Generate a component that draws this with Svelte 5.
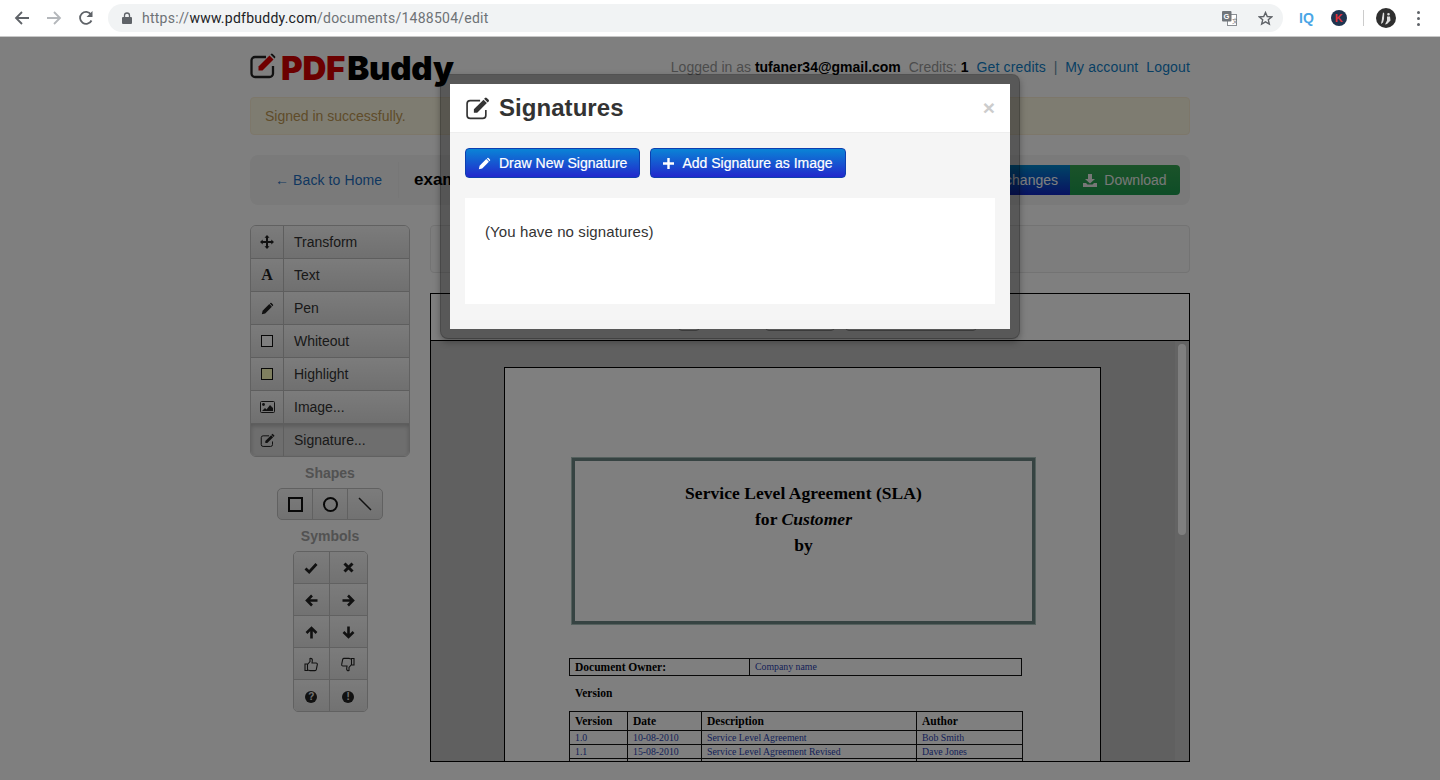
<script>
  const tools = [
    { id: 'move', label: 'Transform' },
    { id: 'a', label: 'Text' },
    { id: 'pen', label: 'Pen' },
    { id: 'white', label: 'Whiteout' },
    { id: 'high', label: 'Highlight' },
    { id: 'image', label: 'Image...' },
    { id: 'edit', label: 'Signature...', active: true }
  ];
  const symbols = ['check', 'x', 'left', 'right', 'up', 'down', 'tup', 'tdown', 'q', 'ex'];
  const rows = [
    ['1.0', '10-08-2010', 'Service Level Agreement', 'Bob Smith'],
    ['1.1', '15-08-2010', 'Service Level Agreement Revised', 'Dave Jones'],
    ['', '', '', '']
  ];
</script>

{#snippet editIcon(size, color)}
  <svg width={size} height={size} viewBox="0 0 24 24" fill="none">
    <path d="M20 13.500V18.500a3 3 0 0 1-3 3H5a3 3 0 0 1-3-3V7.500a3 3 0 0 1 3-3h9.500" stroke={color} stroke-width="1.600"/>
    <path d="M8.500 12.800 17.800 3.500l3.200 3.200L11.700 16H8.500Z" fill={color}/>
    <path d="M19.200 1.800a1.200 1.200 0 0 1 1.700 0l1.800 1.800a1.200 1.200 0 0 1 0 1.700l-.9.900-3.500-3.500Z" fill={color}/>
  </svg>
{/snippet}

{#snippet pencil(size, color)}
  <svg width={size} height={size} viewBox="0 0 16 16">
    <path d="M1 15l1-4.200L10.200 2.600l3.200 3.200L5.200 14Z" fill={color}/>
    <path d="M11.500 1.300a1 1 0 0 1 1.400 0l1.800 1.800a1 1 0 0 1 0 1.400l-.6.600-3.200-3.200Z" fill={color}/>
  </svg>
{/snippet}

{#snippet toolIcon(id)}
  {#if id === 'move'}
    <svg width="14" height="14" viewBox="0 0 14 14" fill="#222">
      <path d="M7 0l2.500 2.700H8V6h3.300V4.500L14 7l-2.700 2.500V8H8v3.300h1.500L7 14l-2.500-2.700H6V8H2.700v1.500L0 7l2.700-2.500V6H6V2.700H4.500Z"/>
    </svg>
  {:else if id === 'a'}
    <span class="glyph-a">A</span>
  {:else if id === 'pen'}
    {@render pencil(13, '#222')}
  {:else if id === 'white'}
    <span class="swatch"></span>
  {:else if id === 'high'}
    <span class="swatch yellow"></span>
  {:else if id === 'image'}
    <svg width="15" height="12" viewBox="0 0 15 12">
      <rect x=".5" y=".5" width="14" height="11" rx="1" fill="none" stroke="#222"/>
      <circle cx="3.500" cy="3.500" r="1.400" fill="#222"/>
      <path d="M2 10l3-3 1.500 1.500L10 4l3 3v3Z" fill="#222"/>
    </svg>
  {:else}
    {@render editIcon(15, '#222')}
  {/if}
{/snippet}

{#snippet symbolIcon(id)}
  {#if id === 'check'}
    <svg width="14" height="12" viewBox="0 0 14 12"><path d="M1.500 6.500l3.700 3.500 7.300-8" fill="none" stroke="#222" stroke-width="2.800"/></svg>
  {:else if id === 'x'}
    <svg width="11" height="11" viewBox="0 0 11 11"><path d="M1.500 1.500l8 8M9.500 1.500l-8 8" stroke="#222" stroke-width="3"/></svg>
  {:else if id === 'left'}
    <svg width="13" height="13" viewBox="0 0 13 13"><path d="M7 1.500 2 6.500l5 5M2.500 6.500H12.500" fill="none" stroke="#222" stroke-width="2.600"/></svg>
  {:else if id === 'right'}
    <svg width="13" height="13" viewBox="0 0 13 13"><path d="M6 1.500l5 5-5 5M10.500 6.500H.5" fill="none" stroke="#222" stroke-width="2.600"/></svg>
  {:else if id === 'up'}
    <svg width="13" height="13" viewBox="0 0 13 13"><path d="M1.500 7l5-5 5 5M6.500 2.500V12.500" fill="none" stroke="#222" stroke-width="2.600"/></svg>
  {:else if id === 'down'}
    <svg width="13" height="13" viewBox="0 0 13 13"><path d="M1.500 6l5 5 5-5M6.500 10.500V.5" fill="none" stroke="#222" stroke-width="2.600"/></svg>
  {:else if id === 'tup'}
    <svg width="14" height="15" viewBox="0 0 14 15"><path d="M1 7h2.500v6.500H1ZM3.500 7.500 6 4.500V1.500c1.500-.5 2.500.5 2.300 2L8 6h4c1 0 1.500.8 1.300 1.600l-1 5c-.2.700-.7 1-1.300 1H6c-1 0-1.500-.6-2.500-.6" fill="none" stroke="#222" stroke-width="1.100"/></svg>
  {:else if id === 'tdown'}
    <svg width="14" height="15" viewBox="0 0 14 15"><path d="M13 8h-2.500V1.500H13ZM10.500 7.500 8 10.500v3c-1.500.5-2.500-.5-2.300-2L6 9H2c-1 0-1.500-.8-1.300-1.600l1-5c.2-.7.7-1 1.300-1h5c1 0 1.500.6 2.500.6" fill="none" stroke="#222" stroke-width="1.100"/></svg>
  {:else if id === 'q'}
    <b class="round">?</b>
  {:else}
    <b class="round">!</b>
  {/if}
{/snippet}

<div class="screen">
  <header class="chrome">
    <svg class="nav first" width="16" height="16" viewBox="0 0 16 16"><path d="M15 8H2.500M8 2 2 8l6 6" fill="none" stroke="#5f6368" stroke-width="1.800"/></svg>
    <svg class="nav" width="16" height="16" viewBox="0 0 16 16"><path d="M1 8h12.500M8 2l6 6-6 6" fill="none" stroke="#b4b7bb" stroke-width="1.800"/></svg>
    <svg class="nav" width="16" height="16" viewBox="0 0 16 16"><path d="M13.500 10.500A6 6 0 1 1 13 4.500" fill="none" stroke="#5f6368" stroke-width="1.800"/><path d="M14.500 1v6h-6Z" fill="#5f6368"/></svg>
    <div class="omnibox">
      <svg width="10" height="12" viewBox="0 0 10 12"><path d="M2.500 5V3.500a2.500 2.500 0 0 1 5 0V5" fill="none" stroke="#5f6368" stroke-width="1.300"/><rect y="5" width="10" height="7" rx="1" fill="#5f6368"/></svg>
      <span class="url"><span class="dim">https://</span>www.pdfbuddy.com<span class="dim">/documents/1488504/edit</span></span>
      <svg class="translate" width="15" height="15" viewBox="0 0 15 15"><rect x="5.500" y="3.500" width="9" height="11" fill="#fff" stroke="#8b8f94"/><rect width="9.500" height="10.500" rx="1" fill="#70757a"/><text x="1.500" y="8" font-size="7.500" font-weight="bold" fill="#fff" font-family="Liberation Sans">G</text><text x="10" y="12" font-size="6" fill="#70757a" font-family="Noto Sans CJK SC">文</text></svg>
      <svg class="star" width="15" height="15" viewBox="0 0 16 16"><path d="M8 1.600l1.900 4.300 4.700.4-3.600 3.100 1.100 4.600L8 11.600 3.900 14 5 9.400 1.400 6.300l4.700-.4Z" fill="none" stroke="#5f6368" stroke-width="1.500"/></svg>
    </div>
    <span class="iq">IQ</span>
    <span class="k">K</span>
    <span class="divider"></span>
    <span class="avatar"><svg width="20" height="20" viewBox="0 0 20 20"><circle cx="10" cy="10" r="10" fill="#2f2f2f"/><path d="M7 4.500c1 0 1.500 1 1.200 2L8 11l-1 3.500-2 1.500c.5-3 1-4 1-6ZM12.500 5a1.300 1.300 0 1 1 0 2.600 1.300 1.300 0 0 1 0-2.600ZM11 8.500h3l.5 4-3.500 3.500-2 .5 2-4Z" fill="#ddd"/></svg></span>
    <span class="dots"><i></i><i></i><i></i></span>
  </header>

  <div class="viewport">
    <div class="page">
      <div class="top">
        <div class="logo">
          <svg width="27" height="27" viewBox="0 0 27 27" fill="none">
            <path d="M23 14v7.500a3.500 3.500 0 0 1-3.500 3.500H5a3.500 3.500 0 0 1-3.500-3.500V8.500A3.500 3.500 0 0 1 5 5h11" stroke="#222" stroke-width="2.300"/>
            <path d="M8.500 14.500 19.500 3.500l4 4L12.500 18.500H8.500Z" fill="#e00000"/>
            <path d="M21 2a1.200 1.200 0 0 1 1.700 0l2.300 2.300a1.200 1.200 0 0 1 0 1.700l-.5.500-4-4Z" fill="#222"/>
          </svg>
          <span class="brand"><b class="red">PDF</b><b>Buddy</b></span>
        </div>
        <nav class="account">
          <span class="muted">Logged in as</span> <strong>tufaner34@gmail.com</strong>
          <span class="muted credits">Credits:</span> <strong>1</strong>
          <a href="#c" class="link credits">Get credits</a>
          <span class="sep">|</span>
          <a href="#a" class="link">My account</a>
          <a href="#l" class="link logout">Logout</a>
        </nav>
      </div>

      <div class="alert">Signed in successfully.</div>

      <div class="well">
        <a href="#h" class="back">← Back to Home</a>
        <span class="well-sep"></span>
        <strong class="filename">example.pdf</strong>
        <div class="actions">
          <button class="save">Save changes</button>
          <button class="download">
            <svg width="14" height="13" viewBox="0 0 14 13" fill="#eee"><path d="M5 0h4v5h3L7 9.500 2 5h3ZM0 9h3l1.500 1.500h5L11 9h3v4H0Z"/></svg>
            Download
          </button>
        </div>
      </div>

      <div class="workspace">
        <aside class="side">
          <div class="tools">
            {#each tools as t}
              <div class="tool" class:active={t.active}>
                <span class="tool-ico">{@render toolIcon(t.id)}</span>
                <span class="tool-label">{t.label}</span>
              </div>
            {/each}
          </div>
          <h4>Shapes</h4>
          <div class="shapes">
            <span><i class="sq"></i></span>
            <span><i class="ci"></i></span>
            <span><svg width="14" height="14" viewBox="0 0 14 14"><path d="M1 1l12 12" stroke="#222" stroke-width="1.500"/></svg></span>
          </div>
          <h4 class="sym">Symbols</h4>
          <div class="symbols">
            {#each symbols as s}
              <span>{@render symbolIcon(s)}</span>
            {/each}
          </div>
        </aside>

        <main class="main">
          <div class="options"></div>
          <div class="canvas">
            <div class="strip">
              <span class="b b1"></span>
              <span class="b b2"></span>
              <span class="b b3"></span>
            </div>
            <div class="viewer">
              <div class="track"><span class="thumb"></span></div>
              <div class="sheet">
                <div class="titlebox">
                  <div><strong>Service Level Agreement (SLA)</strong></div>
                  <div><strong>for <em>Customer</em></strong></div>
                  <div><strong>by</strong></div>
                </div>
                <div class="owner">
                  <strong>Document Owner:</strong>
                  <span>Company name</span>
                </div>
                <div class="version">Version</div>
                <table>
                  <colgroup><col class="c1"/><col class="c2"/><col class="c3"/><col class="c4"/></colgroup>
                  <thead><tr><th>Version</th><th>Date</th><th>Description</th><th>Author</th></tr></thead>
                  <tbody>
                    {#each rows as r}
                      <tr>{#each r as c}<td>{c}</td>{/each}</tr>
                    {/each}
                  </tbody>
                </table>
              </div>
            </div>
          </div>
        </main>
      </div>
    </div>

    <div class="backdrop"></div>

    <div class="modal">
      <div class="modal-head">
        {@render editIcon(25, '#333')}
        <h3>Signatures</h3>
        <span class="close">×</span>
      </div>
      <div class="modal-body">
        <div class="modal-actions">
          <button class="primary">{@render pencil(13, '#fff')}<span>Draw New Signature</span></button>
          <button class="primary"><svg width="11" height="11" viewBox="0 0 11 11"><path d="M5.500 0v11M0 5.500h11" stroke="#fff" stroke-width="2.400"/></svg><span>Add Signature as Image</span></button>
        </div>
        <div class="sig-list">(You have no signatures)</div>
      </div>
    </div>
  </div>
</div>

<style>
  :global(body) { margin: 0; background: #fff; }
  .screen {
    width: 1440px; height: 780px; overflow: hidden;
    font-family: "Liberation Sans", Arial, sans-serif; font-size: 14px; color: #333;
  }
  .chrome {
    height: 36px; border-bottom: 1px solid #c8c8c8; background: #fff;
    display: flex; align-items: center; box-sizing: content-box;
  }
  .nav { margin-left: 16px; flex: none; }
  .nav.first { margin-left: 14px; }
  .omnibox {
    margin-left: 14px; width: 1175px; height: 28px; border-radius: 14px; background: #f1f3f4;
    display: flex; align-items: center; padding-left: 14px; box-sizing: border-box;
  }
  .url { margin-left: 10px; font-family: Roboto, "Liberation Sans", sans-serif; font-size: 14px; color: #202124; letter-spacing: .25px; }
  .dim { color: #6e7276; }
  .translate { margin-left: auto; }
  .star { margin-left: 21px; margin-right: 10px; }
  .iq { margin-left: 16px; color: #4aa6e6; font: bold 14px "Liberation Sans", sans-serif; }
  .k {
    margin-left: 17px; width: 16px; height: 16px; border-radius: 50%; background: #1f3450; color: #e0303a;
    font: bold 11px/16px "Liberation Sans", sans-serif; text-align: center;
  }
  .divider { margin-left: 16px; width: 1px; height: 16px; background: #ccc; }
  .avatar { margin-left: 12px; width: 20px; height: 20px; display: block; line-height: 0; }
  .dots { margin-left: 21px; display: flex; flex-direction: column; gap: 3px; }
  .dots i { width: 3px; height: 3px; border-radius: 50%; background: #5f6368; display: block; }

  .viewport { position: relative; height: 743px; overflow: hidden; }
  .page { width: 940px; margin: 0 auto; }
  .top { height: 60px; display: flex; justify-content: space-between; align-items: flex-start; }
  .logo { display: flex; align-items: flex-start; padding-top: 15px; }
  .brand {
    margin-left: 4px; margin-top: -4px; font-family: Inter, Roboto, sans-serif; font-size: 33px; line-height: 40px; color: #000; letter-spacing: -.2px;
  }
  .brand b { font-weight: 900; }
  .brand .red { color: #d60000; margin-right: 2px; }
  .account { padding-top: 22px; line-height: 16px; }
  .muted { color: #999; }
  .account strong { color: #000; }
  .link { color: #0f7fc8; text-decoration: none; letter-spacing: .15px; }
  .credits { margin-left: 4px; }
  .sep { color: #6a8ea8; margin: 0 4px; }
  .logout { margin-left: 4px; }

  .alert {
    height: 38px; box-sizing: border-box; line-height: 36px; padding-left: 14px; border: 1px solid #fbeed5; border-radius: 4px;
    background: #fcf8e3; color: #c09853;
  }
  .well {
    margin-top: 20px; height: 50px; background: #f5f5f5; border-radius: 8px; display: flex; align-items: center; padding: 0 10px 0 25px; box-sizing: border-box;
  }
  .back { color: #1f6fc0; text-decoration: none; width: 123px; flex: none; letter-spacing: .1px; }
  .well-sep { width: 1px; height: 36px; background: #eee; flex: none; }
  .filename { margin-left: 15px; font-size: 17px; color: #000; }
  .actions { margin-left: auto; display: flex; }
  .actions button {
    height: 30px; border: 0; font: 14px "Liberation Sans", sans-serif; color: #fff; padding: 0; display: flex; align-items: center; justify-content: center;
  }
  .actions .save { width: 140px; justify-content: flex-end; padding-right: 12px; box-sizing: border-box; background: linear-gradient(#0088cc, #1226c4); border-radius: 4px 0 0 4px; }
  .download { width: 110px; gap: 7px; background: linear-gradient(#36a653, #1c9a4e); border-radius: 0 4px 4px 0; }
  .actions .download { color: #f0f0f0; }

  .workspace { margin-top: 20px; display: flex; gap: 20px; }
  .side { width: 160px; flex: none; }
  .tools { border: 1px solid #c2c2c2; border-radius: 6px; overflow: hidden; width: 160px; box-sizing: border-box; }
  .tool {
    height: 33px; display: flex; align-items: center; box-sizing: border-box; border-bottom: 1px solid #bdbdbd;
    background: linear-gradient(#f8f8f8, #e0e0e0); color: #333;
  }
  .tool:last-child { border-bottom: 0; height: 32px; }
  .tool.active { background: #dcdcdc; box-shadow: inset 0 2px 4px rgba(0,0,0,.2); }
  .tool-ico {
    width: 32px; height: 100%; flex: none; display: flex; align-items: center; justify-content: center; border-right: 1px solid #bdbdbd;
  }
  .tool-label { margin-left: 10px; }
  .glyph-a { font: bold 16px "Liberation Serif", serif; color: #222; }
  .swatch { width: 10px; height: 10px; border: 1px solid #111; background: #fff; display: block; }
  .swatch.yellow { background: #ffffbe; }

  h4 { margin: 8px 0 7px; text-align: center; font-size: 14px; line-height: 16px; color: #a4a4a4; }
  h4.sym { margin-top: 8px; }
  .shapes {
    width: 106px; height: 32px; margin: 0 auto; display: flex; border: 1px solid #c2c2c2; border-radius: 5px; overflow: hidden; box-sizing: border-box;
    background: linear-gradient(#f8f8f8, #e4e4e4);
  }
  .shapes span { flex: 1; display: flex; align-items: center; justify-content: center; border-right: 1px solid #c2c2c2; }
  .shapes span:last-child { border-right: 0; }
  .sq { width: 11px; height: 11px; border: 2px solid #111; display: block; }
  .ci { width: 11px; height: 11px; border: 2px solid #111; border-radius: 50%; display: block; }
  .symbols {
    width: 75px; margin: 0 auto; display: grid; grid-template-columns: 1fr 1fr; border: 1px solid #c2c2c2; border-radius: 5px; overflow: hidden; box-sizing: border-box;
  }
  .symbols span {
    height: 32px; display: flex; align-items: center; justify-content: center; box-sizing: border-box;
    background: linear-gradient(#f8f8f8, #e4e4e4); border-bottom: 1px solid #c2c2c2;
  }
  .symbols span:nth-child(n+3) { padding-top: 2px; }
  .symbols span:nth-child(odd) { border-right: 1px solid #c2c2c2; }
  .symbols span:nth-last-child(-n+2) { border-bottom: 0; height: 31px; }
  .round {
    display: block; width: 12px; height: 12px; border-radius: 50%; background: #222; color: #e8e8e8; font: bold 10px/12px "Liberation Sans", sans-serif; text-align: center;
  }

  .main { width: 760px; flex: none; }
  .options { height: 48px; box-sizing: border-box; border: 1px solid #e6e6e6; border-radius: 4px; background: #fbfbfb; }
  .canvas { margin-top: 20px; height: 469px; border: 1px solid #000; box-sizing: border-box; overflow: hidden; }
  .strip { height: 46px; border-bottom: 1px solid #000; display: flex; align-items: flex-end; box-sizing: content-box; padding-bottom: 0; }
  .b { height: 20px; margin-bottom: 9px; border: 1px solid #aaa; border-radius: 4px; box-sizing: border-box; flex: none; }
  .b1 { width: 22px; margin-left: 247px; }
  .b2 { width: 70px; margin-left: 65px; }
  .b3 { width: 132px; margin-left: 10px; }
  .viewer { height: 421px; background: #c0c0c0; position: relative; padding: 26px 0 0 73px; box-sizing: border-box; overflow: hidden; }
  .track { position: absolute; right: 0; top: 0; bottom: 0; width: 14px; background: #c8c8c8; }
  .thumb { position: absolute; left: 3px; top: 3px; width: 8px; height: 191px; border-radius: 4px; background: #fff; }
  .sheet {
    width: 597px; height: 600px; background: #fff; border: 1px solid #000; box-sizing: border-box;
    font-family: "Liberation Serif", "Times New Roman", serif; color: #000;
  }
  .titlebox {
    width: 465px; height: 168px; margin: 89px 0 0 66px; box-sizing: border-box; border: 1px solid #a8c0ba; box-shadow: inset 0 0 0 3px #6c8684;
    padding-top: 22px; text-align: center; font-size: 17.500px; line-height: 26px; letter-spacing: .05px;
  }
  .owner {
    margin: 33px 0 0 64px; width: 453px; height: 18px; box-sizing: border-box; border: 1px solid #111; display: flex; font-size: 11px; line-height: 16px;
  }
  .owner strong { width: 174px; flex: none; padding-left: 5px; border-right: 1px solid #111; box-sizing: content-box; font-size: 11.500px; }
  .owner span { padding-left: 5px; color: #2a3fb0; font-size: 9.800px; line-height: 15px; }
  .version { margin: 10px 0 0 70px; font-weight: bold; font-size: 11.500px; line-height: 14px; }
  table { margin: 11px 0 0 64px; width: 453px; border-collapse: collapse; table-layout: fixed; font-size: 9.800px; }
  .c1 { width: 58px; } .c2 { width: 74px; } .c3 { width: 215px; } .c4 { width: 106px; }
  th { border: 1px solid #111; height: 19px; padding: 0 5px; text-align: left; font-size: 11.500px; line-height: 14px; box-sizing: border-box; }
  td { border: 1px solid #111; height: 14px; padding: 0 5px; color: #2a3fb0; line-height: 12px; box-sizing: border-box; overflow: hidden; white-space: nowrap; }

  .backdrop { position: absolute; inset: 0; background: rgba(0,0,0,.5); }
  .modal {
    position: absolute; left: 440px; top: 37px; width: 560px; border: 10px solid rgba(0,0,0,.3); border-radius: 8px; background-clip: padding-box;
    box-shadow: 0 3px 7px rgba(0,0,0,.3); background-color: #fff;
  }
  .modal-head {
    height: 49px; box-sizing: border-box; background: #fff; border-bottom: 1px solid #eee; display: flex; align-items: center; padding: 0 15px; gap: 9px;
  }
  .modal-head h3 { margin: 0; font-size: 24px; line-height: 30px; font-weight: bold; color: #333; letter-spacing: .05px; }
  .close { margin-left: auto; font: bold 21px "Liberation Sans", sans-serif; color: #ccc; }
  .modal-body { background: #f5f5f5; padding: 15px 15px 25px; height: 196px; box-sizing: border-box; }
  .modal-actions { display: flex; gap: 10px; }
  .primary {
    height: 30px; border: 1px solid #0d3fb0; border-radius: 4px; background: linear-gradient(#0a84d6, #2228cc); color: #fff;
    font: 14px "Liberation Sans", sans-serif; display: flex; align-items: center; gap: 8.500px; padding: 0 12px 0 11.500px; box-sizing: border-box; -webkit-text-stroke: .2px #fff;
  }
  .sig-list { margin-top: 20px; height: 106px; background: #fff; padding: 25px 20px 0; box-sizing: border-box; font-size: 15px; letter-spacing: .1px; line-height: 18px; color: #333; }
</style>
